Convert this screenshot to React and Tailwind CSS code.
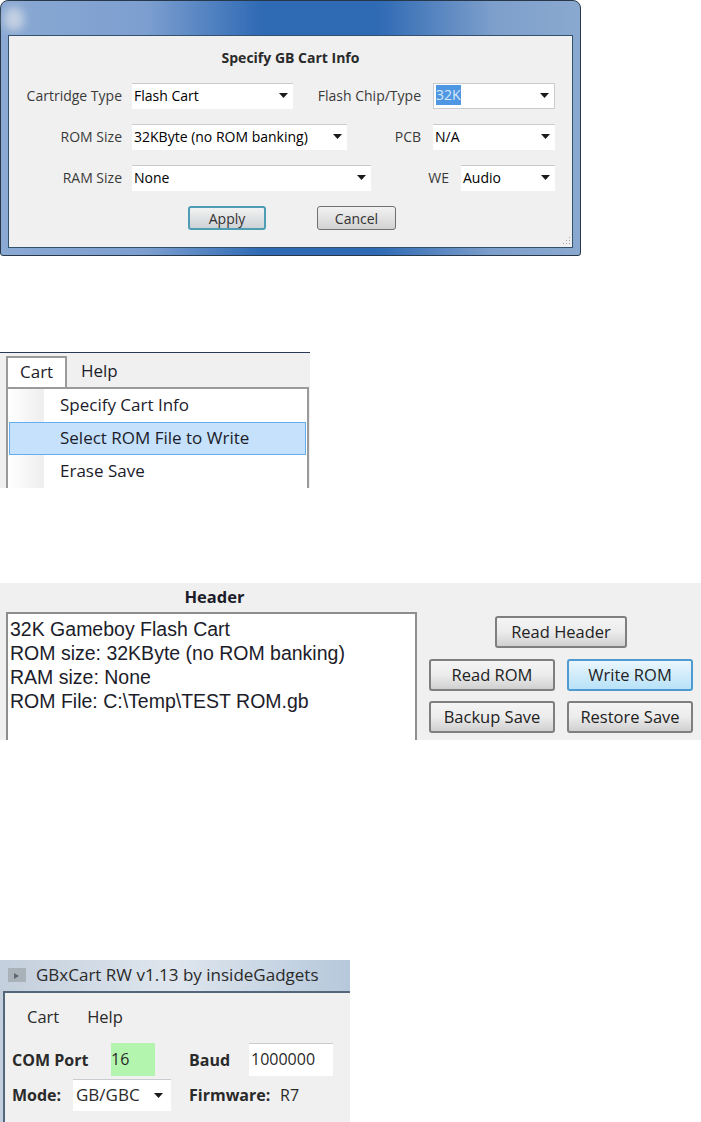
const FONT = "font-['Open_Sans','Noto_Sans',sans-serif]";

function Arrow() {
  return (
    <svg width="9" height="5" viewBox="0 0 9 5" className="shrink-0">
      <path d="M0 0h9L4.5 5z" fill="#1a1a1a" />
    </svg>
  );
}

function Combo({ width, text, selected, focus }) {
  return (
    <div className={`flex items-center justify-between h-[26px] ${width} pl-[2px] pr-[5px] pb-[2px] bg-white border-t border-[#c9ccd0] ${focus ? "border border-[#b5c9d9]" : ""}`}>
      {selected ? <span className="bg-[#4f97e3] text-[#d8e8f8] leading-[20px]">{text}</span> : <span>{text}</span>}
      <Arrow />
    </div>
  );
}

function DialogRow({ left, mid, gap, right }) {
  return (
    <div className="flex items-center h-[26px]">
      <div className="w-[105px] pb-[2px] whitespace-nowrap text-right text-[#3a3a3a]">{left}</div>
      <div className="ml-[10px]">{mid}</div>
      <div className="flex-1 pb-[2px] text-right text-[#3a3a3a]">{gap}</div>
      <div className="ml-[12px] flex justify-end">{right}</div>
    </div>
  );
}

function GreyButton({ children, width, className = "" }) {
  return (
    <div className={`flex items-center justify-center h-[32px] ${width} rounded-[3px] border-2 border-[#7f7f7f] bg-gradient-to-b from-[#f4f4f4] via-[#ececec] to-[#d0d0d0] text-[#222] ${className}`}>
      {children}
    </div>
  );
}

function SpecifyDialog() {
  return (
    <div className="relative w-[581px] h-[256px] rounded-t-[8px] rounded-b-[3px] border border-[#26384a] bg-[linear-gradient(90deg,#8aa9d3_0%,#7d9fd0_25%,#2f6ab4_45%,#2f6ab4_65%,#7d9fcb_85%,#8aa9cf_100%)] px-[7px] pt-[34px] pb-[7px]">
      <div className="absolute left-[3px] top-[6px] w-[20px] h-[24px] rounded-full bg-[#c3d0e2] blur-[4px]" />
      <div className="relative h-full border border-[#34526f] bg-[#f0f0f0] text-[14px] pt-[12px] px-[8px]">
        <div className="text-center font-bold text-[14px] text-[#2a2a2a] leading-[20px] h-[35px]">Specify GB Cart Info</div>
        <div className="flex flex-col gap-[15px] pr-[9px]">
          <DialogRow left="Cartridge Type" mid={<Combo width="w-[161px]" text="Flash Cart" />} gap="Flash Chip/Type" right={<Combo width="w-[122px]" text="32K" selected focus />} />
          <DialogRow left="ROM Size" mid={<Combo width="w-[215px]" text="32KByte (no ROM banking)" />} gap="PCB" right={<Combo width="w-[122px]" text="N/A" />} />
          <DialogRow left="RAM Size" mid={<Combo width="w-[239px]" text="None" />} gap="WE" right={<Combo width="w-[94px]" text="Audio" />} />
        </div>
        <div className="flex mt-[15px] ml-[171px] gap-[51px]">
          <div className="flex items-center justify-center w-[78px] h-[24px] pt-[1px] rounded-[3px] border-2 border-[#4f9db5] bg-gradient-to-b from-[#f2f2f2] to-[#cfd3d6] text-[#333]">Apply</div>
          <div className="flex items-center justify-center w-[79px] h-[24px] pt-[1px] rounded-[3px] border border-[#6f6f6f] bg-gradient-to-b from-[#f2f2f2] to-[#d2d2d2] text-[#333]">Cancel</div>
        </div>
        <svg width="10" height="10" viewBox="0 0 10 10" className="absolute right-[1px] bottom-[1px]">
          <path d="M8 1h1v1H8zM5 4h1v1H5zM8 4h1v1H8zM2 7h1v1H2zM5 7h1v1H5zM8 7h1v1H8z" fill="#a8a8a8" />
        </svg>
      </div>
    </div>
  );
}

function CartMenu() {
  return (
    <div className="mt-[96px] w-[310px] h-[136px] border-t border-[#2a3a55] bg-[#f0f0f0] text-[17px] text-[#1c1c2a] overflow-hidden">
      <div className="flex h-[34px] pt-[3px]">
        <div className="ml-[6px] w-[61px] h-[31px] pl-[12px] leading-[28px] bg-white border-2 border-b-0 border-[#9a9a9a] relative z-10">Cart</div>
        <div className="ml-[14px] leading-[30px]">Help</div>
      </div>
      <div className="ml-[6px] mr-[1px] h-[102px] border-t-2 border-l-2 border-r-2 border-[#9a9a9a] bg-white relative">
        <div className="absolute left-0 top-0 bottom-0 w-[36px] bg-gradient-to-r from-white to-[#eeeeee]" />
        <div className="relative h-[33px] pl-[52px] leading-[31px]">Specify Cart Info</div>
        <div className="relative h-[33px] ml-[1px] mr-[1px] pl-[50px] leading-[29px] bg-[#c5e1fb] border border-[#64aef0]">Select ROM File to Write</div>
        <div className="relative h-[32px] pl-[52px] leading-[32px]">Erase Save</div>
      </div>
    </div>
  );
}

function HeaderPanel() {
  return (
    <div className="mt-[95px] w-[701px] h-[157px] bg-[#f0f0f0] flex text-[16.5px] overflow-hidden font-['Liberation_Sans',sans-serif]">
      <div className="w-[411px] ml-[6px]">
        <div className={`h-[29px] pl-[6px] text-center font-bold text-[#1c1c2a] leading-[28px] ${FONT}`}>Header</div>
        <div className="h-[200px] border-2 border-b-0 border-[#8e8e8e] bg-white pl-[2px] pt-[3px] text-[19.5px] leading-[24px] text-[#1c1c2a]">
          <div>32K Gameboy Flash Cart</div>
          <div>ROM size: 32KByte (no ROM banking)</div>
          <div>RAM size: None</div>
          <div>ROM File: C:\Temp\TEST ROM.gb</div>
        </div>
      </div>
      <div className={`ml-[12px] pt-[33px] flex flex-col items-start ${FONT}`}>
        <GreyButton width="w-[132px]" className="ml-[66px]">Read Header</GreyButton>
        <div className="flex gap-[12px] mt-[11px]">
          <GreyButton width="w-[126px]">Read ROM</GreyButton>
          <div className="flex items-center justify-center w-[126px] h-[32px] rounded-[3px] border-2 border-[#4f9ad0] bg-gradient-to-b from-[#eaf6fd] to-[#b8e2f8] text-[#222]">Write ROM</div>
        </div>
        <div className="flex gap-[12px] mt-[10px]">
          <GreyButton width="w-[126px]">Backup Save</GreyButton>
          <GreyButton width="w-[126px]">Restore Save</GreyButton>
        </div>
      </div>
    </div>
  );
}

function MainWindow() {
  return (
    <div className="mt-[220px] w-[350px] h-[162px] bg-gradient-to-r from-[#c3cfdc] via-[#dfe6ee] to-[#b6c8db]">
      <div className="flex items-center h-[31px] pl-[7px] pb-[2px] text-[#2a2a2a] text-[17px]">
        <svg width="20" height="16" viewBox="0 0 20 16" className="shrink-0">
          <rect x="1" y="1" width="18" height="14" fill="#a9b2b9" />
          <path d="M7 6l5 3-5 3z" fill="#5f6a70" />
        </svg>
        <span className="ml-[9px] whitespace-nowrap">GBxCart RW v1.13 by insideGadgets</span>
      </div>
      <div className="h-[131px] ml-[3px] border-t-2 border-l-2 border-[#54677a] bg-[#f0f0f0] text-[16px] text-[#2a2a2a]">
        <div className="flex h-[49px] pl-[22px] gap-[28px] text-[16.5px] items-center">
          <span>Cart</span>
          <span>Help</span>
        </div>
        <div className="flex items-center h-[35px] pl-[7px] font-bold">
          <span className="w-[99px]">COM Port</span>
          <div className="w-[44px] h-[33px] bg-[#b3f5ae] font-normal leading-[32px]">16</div>
          <span className="ml-[34px] w-[60px]">Baud</span>
          <div className="w-[84px] h-[33px] bg-white border-t border-[#c9ccd0] font-normal leading-[31px] pl-[2px]">1000000</div>
        </div>
        <div className="flex items-center h-[35px] pl-[7px] font-bold">
          <span className="w-[61px]">Mode:</span>
          <div className="flex items-center justify-between w-[98px] h-[32px] bg-white border-t border-[#c9ccd0] font-normal pl-[3px] pr-[8px]">
            <span className="text-[17px]">GB/GBC</span>
            <Arrow />
          </div>
          <span className="ml-[18px] w-[91px]">Firmware:</span>
          <span className="font-normal">R7</span>
        </div>
      </div>
    </div>
  );
}

export default function App() {
  return (
    <div className={`w-[701px] h-[1122px] bg-white overflow-hidden ${FONT}`}>
      <SpecifyDialog />
      <CartMenu />
      <HeaderPanel />
      <MainWindow />
    </div>
  );
}
